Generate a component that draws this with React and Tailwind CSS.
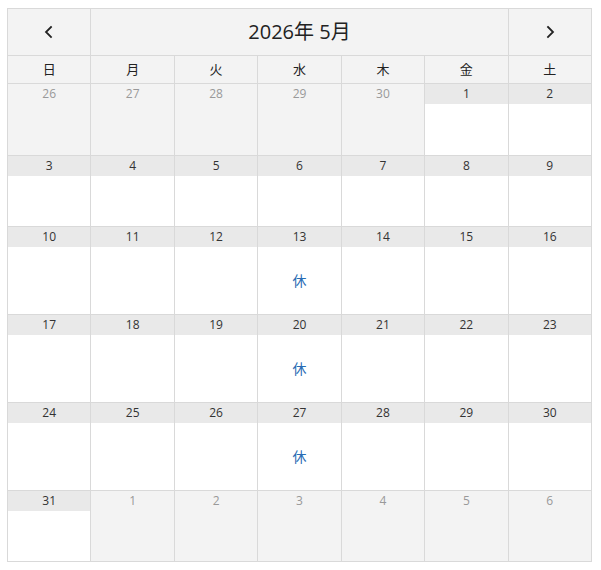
import React from 'react';

const WEEKDAYS = ['日', '月', '火', '水', '木', '金', '土'];

// 2026年5月 calendar, 6 weeks
const weeks = [
  { h: 'h-[72px]', days: [[26, false], [27, false], [28, false], [29, false], [30, false], [1, true], [2, true]] },
  { h: 'h-[71px]', days: [[3, true], [4, true], [5, true], [6, true], [7, true], [8, true], [9, true]] },
  { h: 'h-[88px]', days: [[10, true], [11, true], [12, true], [13, true, '休'], [14, true], [15, true], [16, true]] },
  { h: 'h-[88px]', days: [[17, true], [18, true], [19, true], [20, true, '休'], [21, true], [22, true], [23, true]] },
  { h: 'h-[88px]', days: [[24, true], [25, true], [26, true], [27, true, '休'], [28, true], [29, true], [30, true]] },
  { h: 'h-[71px]', days: [[31, true], [1, false], [2, false], [3, false], [4, false], [5, false], [6, false]] },
];

function Chevron({ dir }) {
  return (
    <svg width="16" height="16" viewBox="0 0 16 16" fill="none" stroke="#222" strokeWidth="1.8" strokeLinecap="square">
      {dir === 'left' ? <path d="M10 3 L5 8 L10 13" /> : <path d="M6 3 L11 8 L6 13" />}
    </svg>
  );
}

function DayCell({ day, current, note }) {
  if (!current) {
    return (
      <div className="border-r border-b border-[#d9d9d9] bg-[#f3f3f3]">
        <div className="h-[20px] flex items-center justify-center text-[12px] text-[#999]">{day}</div>
      </div>
    );
  }
  return (
    <div className="border-r border-b border-[#d9d9d9] bg-white flex flex-col">
      <div className="h-[20px] bg-[#e9e9e9] flex items-center justify-center text-[12px] text-[#333]">{day}</div>
      {note && (
        <div className="flex-1 flex items-center justify-center text-[14px] text-[#2a6cb4]">{note}</div>
      )}
    </div>
  );
}

export default function App() {
  return (
    <div className="min-h-screen bg-white pt-[8px] pl-[7px]" style={{ fontFamily: '"Open Sans", "Noto Sans CJK JP", sans-serif' }}>
      <div className="w-[585px] border-l border-t border-[#d9d9d9]">
        {/* Header */}
        <div className="grid grid-cols-7 h-[47px] bg-[#f3f3f3]">
          <button className="border-r border-b border-[#d9d9d9] flex items-center justify-center">
            <Chevron dir="left" />
          </button>
          <div className="col-span-5 border-r border-b border-[#d9d9d9] flex items-center justify-center text-[20px] text-[#222]">
            2026年 5月
          </div>
          <button className="border-r border-b border-[#d9d9d9] flex items-center justify-center">
            <Chevron dir="right" />
          </button>
        </div>

        {/* Weekdays */}
        <div className="grid grid-cols-7 h-[28px] bg-[#f3f3f3]">
          {WEEKDAYS.map((w) => (
            <div key={w} className="border-r border-b border-[#d9d9d9] flex items-center justify-center text-[13px] text-[#222]">
              {w}
            </div>
          ))}
        </div>

        {/* Weeks */}
        {weeks.map((wk, i) => (
          <div key={i} className={`grid grid-cols-7 ${wk.h}`}>
            {wk.days.map(([d, cur, note], j) => (
              <DayCell key={j} day={d} current={cur} note={note} />
            ))}
          </div>
        ))}
      </div>
    </div>
  );
}
